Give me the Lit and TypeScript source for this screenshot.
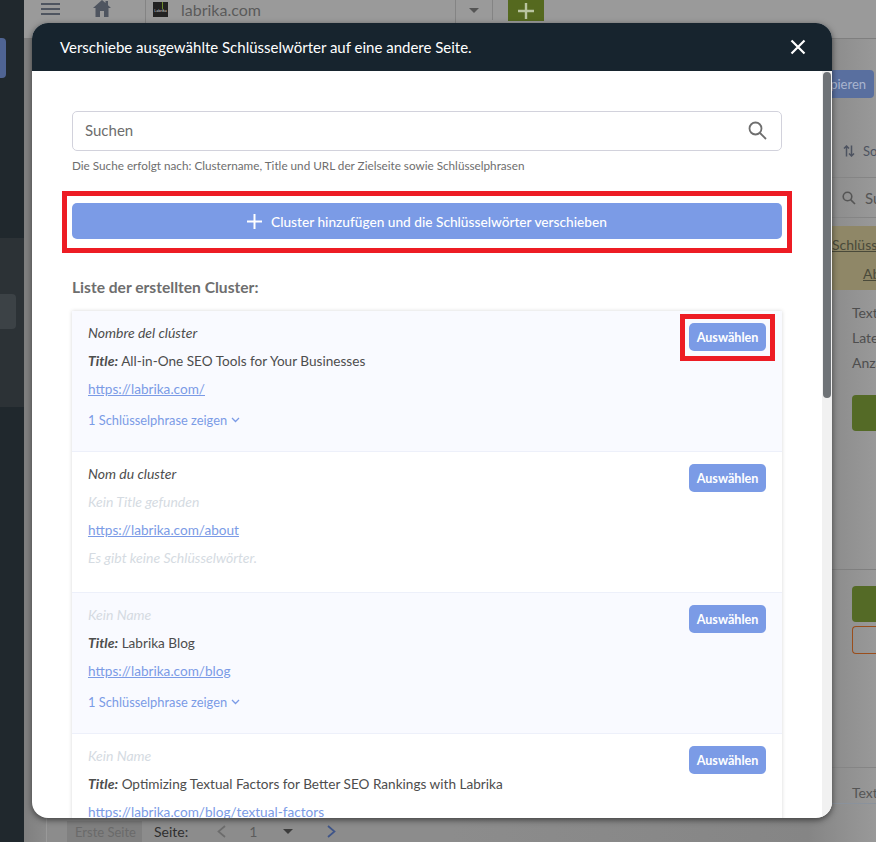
import { LitElement, html, css } from "lit";
import { customElement } from "lit/decorators.js";

const clusters = [
  { name: "Nombre del clúster", title: "All-in-One SEO Tools for Your Businesses", url: "https://labrika.com/", keys: true },
  { name: "Nom du cluster", title: "", url: "https://labrika.com/about", keys: false },
  { name: "", title: "Labrika Blog", url: "https://labrika.com/blog", keys: true },
  { name: "", title: "Optimizing Textual Factors for Better SEO Rankings with Labrika", url: "https://labrika.com/blog/textual-factors", keys: true },
];

@customElement("app-root")
export class AppRoot extends LitElement {
  static styles = css`
    :host { display: block; position: relative; width: 876px; height: 842px; overflow: hidden; font-family: Lato, "Noto Sans", sans-serif; background: #8d8d8d; }
    * { box-sizing: border-box; }
    .page { display: grid; grid-template-columns: 24px 1fr; height: 842px; }
    .side { background: #20282d; display: flex; flex-direction: column; padding-top: 38px; }
    .side-tab { width: 6px; height: 40px; background: #4f6493; border-radius: 0 4px 4px 0; }
    .side-group { margin-top: 160px; height: 169px; background: #2c3236; padding-top: 56px; }
    .side-item { width: 16px; height: 35px; background: #3c4246; border-radius: 0 4px 4px 0; }
    .main { display: flex; flex-direction: column; background: linear-gradient(90deg,#7f7f7f,#8c8c8c 3%,#8c8c8c 50%,#858585 92%,#999 100%); color: #4d4d4d; min-width: 0; }
    .top { height: 39px; flex: none; display: flex; align-items: flex-start; border-bottom: 1px solid #7f7f7f; background: #9a9a9a; }
    .burger { margin: 3px 0 0 17px; width: 19px; display: flex; flex-direction: column; gap: 3px; }
    .burger i { display: block; height: 2px; background: #4f5560; }
    .home { margin: 0 0 0 33px; width: 18px; height: 18px; }
    .domain { margin-left: 34px; width: 311px; height: 39px; border-left: 1px solid #848484; border-right: 1px solid #848484; display: flex; align-items: flex-start; font-size: 16px; padding: 0 0 0 7px; gap: 13px; color: #5a5a5a; line-height: 20px; }
    .logo { width: 15px; height: 15px; margin-top: 2px; background: #222; position: relative; color: #ccc; font-size: 4px; line-height: 5px; padding-top: 6px; text-align: center; overflow: hidden; }
    .logo::before { content: ""; position: absolute; left: 9px; top: 0; width: 1px; height: 7px; background: #6d8a2a; }
    .caret { width: 37px; height: 20px; border-right: 1px solid #848484; display: flex; justify-content: center; padding-top: 8px; }
    .caret i { border: 5px solid transparent; border-top: 5px solid #555; border-bottom: 0; }
    .add { margin-left: 15px; width: 36px; height: 21px; background: #55691f; color: #b9c4a0; display: flex; align-items: center; justify-content: center; }
    .scroll-bg { flex: 1; display: flex; justify-content: space-between; min-height: 0; }
    .left { flex: 1; margin-left: 22px; border-left: 1px solid #999; display: flex; align-items: flex-end; padding-left: 20px; }
    .right { width: 44px; flex: none; font-size: 14px; display: flex; flex-direction: column; white-space: nowrap; overflow: hidden; }
    .right svg { flex: none; }
    .copy { margin-top: 31px; flex: none; height: 28px; width: 42px; background: #596f9f; color: #a9b5cf; border-radius: 0 4px 4px 0; font-size: 13px; line-height: 28px; display: flex; justify-content: flex-end; padding-right: 8px; }
    .sort { height: 80px; flex: none; padding: 44px 0 0 11px; display: flex; gap: 8px; border-bottom: 1px solid #858585; font-size: 13px; line-height: 18px; color: #4d5360; align-items: flex-start; }
    .sort svg { margin-top: 3px; }
    .find { height: 40px; flex: none; padding: 10px 0 0 10px; display: flex; gap: 9px; border-bottom: 1px solid #858585; color: #555; font-size: 15px; line-height: 20px; }
    .find svg { margin-top: 3px; }
    .warn { height: 64px; flex: none; margin-top: 8px; background: #8f8767; color: #4a4a3a; padding: 10px 0 0 0; font-size: 14px; line-height: 18px; }
    .warn u { display: block; }
    .warn u + u { margin: 11px 0 0 31px; }
    .facts { padding: 10px 0 0 20px; font-size: 14px; line-height: 25px; color: #4e4e4e; height: 280px; flex: none; border-bottom: 1px solid #7f7f7f; }
    .green { display: block; background: #546a26; width: 40px; height: 36px; border-radius: 4px 0 0 4px; margin-top: 20px; }
    .lower { padding: 16px 0 0 20px; height: 198px; flex: none; border-bottom: 1px solid #858585; }
    .lower .green { margin: 0; }
    .outline { width: 40px; height: 28px; border: 1px solid #9a4e1c; border-right: 0; border-radius: 4px 0 0 4px; margin-top: 4px; }
    .lower-text { padding: 15px 0 0 20px; height: 36px; flex: none; font-size: 14px; line-height: 20px; color: #555; border-bottom: 1px solid #8a929c; }
    .pager { display: flex; align-items: center; height: 21px; font-size: 14px; color: #2f2f2f; white-space: nowrap; }
    .first { background: #808080; color: #6a6a6a; padding: 1px 8px 0; height: 21px; line-height: 20px; width: 75px; font-size: 13px; overflow: hidden; }
    .seite { margin-left: 12px; margin-right: 29px; }
    .pager svg { display: block; flex: none; }
    .num { margin: 0 26px 0 23px; color: #5c5c5c; }
    .tri { border: 5px solid transparent; border-top: 5px solid #3c3c3c; border-bottom: 0; margin-right: 34px; }

    .modal { position: absolute; left: 32px; top: 23px; width: 800px; height: 795px; border-radius: 16px; background: #fff; overflow: hidden; box-shadow: 0 2px 6px rgba(0,0,0,.55); display: flex; flex-direction: column; }
    .head { height: 48px; flex: none; background: #17242e; color: #fff; display: flex; align-items: center; justify-content: space-between; padding: 0 26px 0 28px; font-size: 15px; }
    .head svg { display: block; }
    .body-wrap { flex: 1; display: flex; min-height: 0; }
    .body { flex: 1; min-width: 0; padding: 40px 40px 0; overflow: hidden; }
    .track { width: 10px; background: #f1f1f1; padding: 1px 1px 0; flex: none; }
    .thumb { height: 326px; background: #6f7377; border-radius: 4px; width: 8px; }
    .search { height: 40px; border: 1px solid #d2d2dc; border-radius: 5px; display: flex; align-items: center; justify-content: space-between; padding: 0 14px 2px 12px; color: #6d6d6d; font-size: 15px; }
    .hint { font-size: 11.73px; color: #6e6e6e; margin-top: 7px; line-height: 15px; white-space: nowrap; }
    .mark { border: 5px solid #ed1c24; padding: 7px 5px 9px; margin: 18px -10px 0; }
    .wide { width: 100%; height: 36px; background: #7b9be6; color: #fff; border: 0; border-radius: 5px; display: flex; align-items: center; justify-content: center; gap: 9px; font: inherit; font-size: 13.7px; font-weight: 500; padding: 0; }
    .list-title { font-size: 15.6px; font-weight: 700; color: #6e6e6e; margin-top: 24px; line-height: 20px; }
    .list { margin-top: 14px; box-shadow: 0 0 4px rgba(0,0,0,.16); }
    .card { height: 141px; padding: 11px 16px 0; display: flex; justify-content: space-between; border-bottom: 1px solid #edf0fa; background: #fff; position: relative; }
    .card:nth-child(odd) { background: #f9faff; }
    .lines { font-size: 13.6px; color: #4d4d4d; }
    .line { height: 28px; line-height: 22px; white-space: nowrap; }
    .it { font-style: italic; font-size: 14px; }
    .muted { color: #d5dbe2; font-style: italic; font-size: 14px; }
    .line b { font-style: italic; font-size: 14px; }
    a { color: #7b9be6; }
    .show { color: #7b9be6; font-size: 12.85px; display: flex; align-items: center; gap: 4px; margin-top: 3px; line-height: 22px; }
    .pick { width: 77px; height: 28px; background: #7b9be6; color: #fff; border: 0; border-radius: 5px; font: inherit; font-size: 12.6px; font-weight: 700; padding: 0; margin-top: 1px; flex: none; }
    .pick-mark { position: absolute; right: 7px; top: 3px; width: 95px; height: 47px; border: 5px solid #ed1c24; }
  `;

  private card(c: (typeof clusters)[number], i: number) {
    return html`<div class="card">
      <div class="lines">
        <div class="line it ${c.name ? "" : "muted"}">${c.name || "Kein Name"}</div>
        <div class="line">${c.title ? html`<b>Title:</b> ${c.title}` : html`<span class="muted">Kein Title gefunden</span>`}</div>
        <div class="line"><a href="#">${c.url}</a></div>
        ${c.keys
          ? html`<div class="show">1 Schlüsselphrase zeigen
              <svg width="9" height="6" viewBox="0 0 9 6" fill="none" stroke="#7b9be6" stroke-width="1.3"><path d="M1 1l3.5 3.5L8 1" /></svg></div>`
          : html`<div class="line muted">Es gibt keine Schlüsselwörter.</div>`}
      </div>
      ${i === 0 ? html`<div class="pick-mark"></div>` : ""}
      <button class="pick">Auswählen</button>
    </div>`;
  }

  render() {
    return html`
      <div class="page">
        <div class="side">
          <div class="side-tab"></div>
          <div class="side-group"><div class="side-item"></div></div>
        </div>
        <div class="main">
          <div class="top">
            <div class="burger"><i></i><i></i><i></i></div>
            <svg class="home" viewBox="0 0 18 18" fill="#4f5560"><path d="M9 0L0 8h2.5v9h4.5v-6h4v6h4.5V8H18l-3-2.7V1h-2.5v2.1z" /></svg>
            <div class="domain"><div class="logo">Labrika</div><span>labrika.com</span></div>
            <div class="caret"><i></i></div>
            <div class="add"><svg width="16" height="16" viewBox="0 0 16 16" stroke="#b9c4a0" stroke-width="2.4"><path d="M8 0v16M0 8h16" /></svg></div>
          </div>
          <div class="scroll-bg">
            <div class="left">
              <div class="pager">
                <div class="first">Erste Seite</div>
                <span class="seite">Seite:</span>
                <svg width="9" height="13" viewBox="0 0 9 13" fill="none" stroke="#6c6c6c" stroke-width="1.7"><path d="M8 1L1.5 6.5 8 12" /></svg>
                <span class="num">1</span>
                <i class="tri"></i>
                <svg width="9" height="13" viewBox="0 0 9 13" fill="none" stroke="#3f5589" stroke-width="1.7"><path d="M1 1l6.5 5.5L1 12" /></svg>
              </div>
            </div>
            <div class="right">
              <div class="copy">pieren</div>
              <div class="sort">
                <svg width="12" height="12" viewBox="0 0 12 12" fill="none" stroke="#4d5360" stroke-width="1.5"><path d="M3.5 11.5V1M1 3.5L3.5 1 6 3.5M8.5 .5V11M6 8.5L8.5 11 11 8.5" /></svg>
                <span>So</span>
              </div>
              <div class="find">
                <svg width="14" height="14" viewBox="0 0 14 14" fill="none" stroke="#555" stroke-width="1.6"><circle cx="5.5" cy="5.5" r="4.3" /><path d="M8.6 8.6L13 13" /></svg>
                <span>Su</span>
              </div>
              <div class="warn"><u>Schlüsse</u><u>Ab</u></div>
              <div class="facts">Text<br />Late<br />Anza<span class="green"></span></div>
              <div class="lower"><span class="green"></span><div class="outline"></div></div>
              <div class="lower-text">Text</div>
            </div>
          </div>
        </div>
      </div>
      <div class="modal">
        <div class="head">
          <span>Verschiebe ausgewählte Schlüsselwörter auf eine andere Seite.</span>
          <svg width="16" height="16" viewBox="0 0 16 16" stroke="#fff" stroke-width="2.2"><path d="M1.5 1.5l13 13M14.5 1.5l-13 13" /></svg>
        </div>
        <div class="body-wrap">
          <div class="body">
            <div class="search">
              <span>Suchen</span>
              <svg width="19" height="19" viewBox="0 0 19 19" fill="none" stroke="#6e6e6e" stroke-width="1.8"><circle cx="7.5" cy="7.5" r="6" /><path d="M12 12l6 6" /></svg>
            </div>
            <div class="hint">Die Suche erfolgt nach: Clustername, Title und URL der Zielseite sowie Schlüsselphrasen</div>
            <div class="mark">
              <button class="wide">
                <svg width="15" height="15" viewBox="0 0 15 15" stroke="#fff" stroke-width="2"><path d="M7.5 0v15M0 7.5h15" /></svg>
                Cluster hinzufügen und die Schlüsselwörter verschieben
              </button>
            </div>
            <div class="list-title">Liste der erstellten Cluster:</div>
            <div class="list">${clusters.map((c, i) => this.card(c, i))}</div>
          </div>
          <div class="track"><div class="thumb"></div></div>
        </div>
      </div>
    `;
  }
}
